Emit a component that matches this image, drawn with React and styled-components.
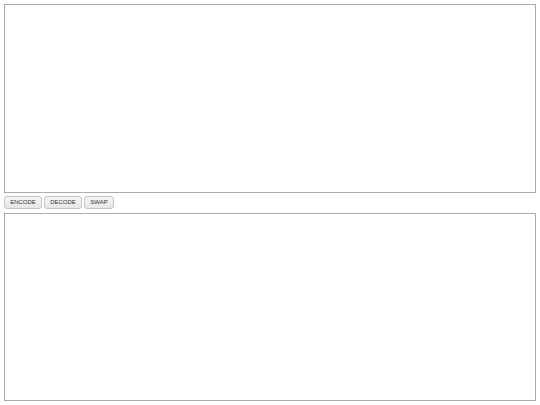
import React from 'react'
import styled, { createGlobalStyle } from 'styled-components'

const GlobalStyle = createGlobalStyle`
    html, body {
        margin: 0;
        padding: 0;
        background: #fff;
    }
    body {
        padding: 4px;
        font-family: "Liberation Sans", Arial, sans-serif;
    }
`

const Page = styled.div`
    display: flex;
    flex-direction: column;
    width: 532px;
`

const TextBox = styled.textarea`
    display: block;
    box-sizing: border-box;
    width: 100%;
    height: ${props => props.h}px;
    margin: 0;
    padding: 2px;
    border: 1px solid #aaa;
    resize: none;
    background: #fff;
    font-family: "Liberation Mono", monospace;
    font-size: 11px;
    outline: none;
`

const Toolbar = styled.div`
    display: flex;
    gap: 2px;
    height: 13px;
    margin: 3px 0 4px;
`

const Button = styled.button`
    box-sizing: border-box;
    height: 13px;
    width: ${props => props.w}px;
    margin: 0;
    padding: 0;
    border: 1px solid #c4c4c4;
    border-radius: 3px;
    background: linear-gradient(#f7f7f7, #e6e6e6);
    color: #333;
    font-family: "Liberation Sans", Arial, sans-serif;
    font-size: 6px;
    line-height: 11px;
    cursor: pointer;
`

const buttons = [
    {label: 'ENCODE', w: 38},
    {label: 'DECODE', w: 38},
    {label: 'SWAP', w: 30}
]

export default () => (
    <>
        <GlobalStyle />
        <Page>
            <TextBox h={189} />
            <Toolbar>
                {buttons.map(b => (
                    <Button key={b.label} w={b.w}>{b.label}</Button>
                ))}
            </Toolbar>
            <TextBox h={188} />
        </Page>
    </>
)
